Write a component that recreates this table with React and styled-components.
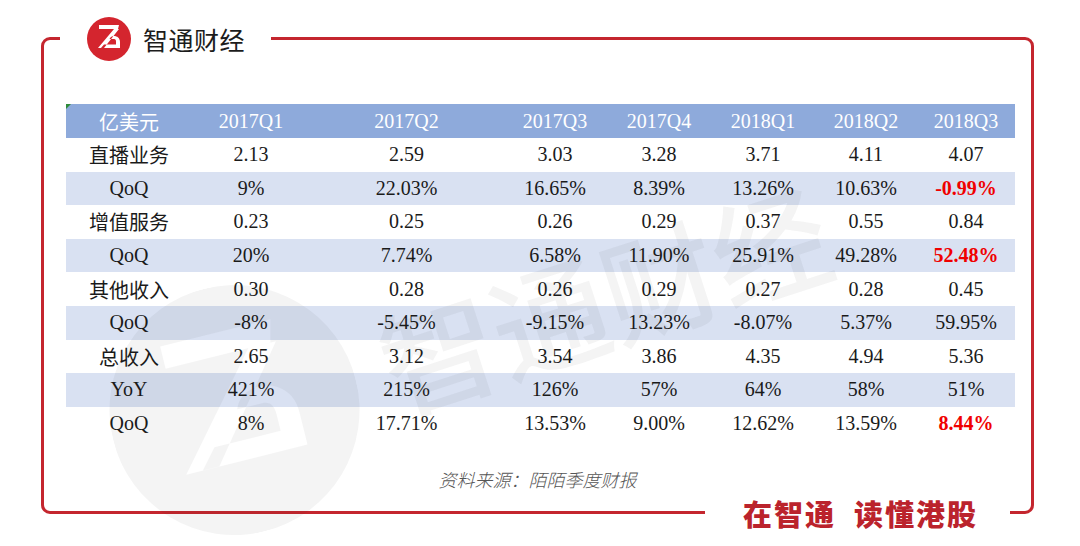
import React from "react";
import styled, { createGlobalStyle } from "styled-components";

const GlobalStyle = createGlobalStyle`
  html, body {
    margin: 0;
    padding: 0;
    background: #ffffff;
  }
`;

const RED = "#c4262e";
const COLS = "126px 118px 193px 104px 104px 104px 102px 98px";

const Page = styled.div`
  position: relative;
  width: 1080px;
  height: 546px;
  padding-top: 37px;
  box-sizing: border-box;
  overflow: hidden;
  background: #fff;
`;

const Frame = styled.section`
  box-sizing: border-box;
  width: 993px;
  height: 477px;
  margin-left: 41px;
  border: 3px solid ${RED};
  border-radius: 9px;
  display: flex;
  flex-direction: column;
`;

const Brand = styled.header`
  align-self: flex-start;
  height: 44px;
  margin: -23.5px 0 0 16px;
  padding: 0 26px 0 27px;
  display: flex;
  align-items: center;
  gap: 12px;
  background: #fff;
`;

const BrandName = styled.span`
  font-family: "Noto Sans CJK SC", sans-serif;
  font-size: 25px;
  font-weight: 400;
  color: #1c1c1c;
  letter-spacing: 0.5px;
`;

const Table = styled.div`
  position: relative;
  width: 949px;
  margin: 43.5px 0 0 22px;
`;

const Row = styled.div`
  position: relative;
  display: grid;
  grid-template-columns: ${COLS};
  height: ${(p) => (p.$tone === "head" ? "34px" : "33.6px")};
  background: ${(p) =>
    p.$tone === "head" ? "#8eaadb" : p.$tone === "band" ? "#d9e1f2" : "#fff"};
  color: ${(p) => (p.$tone === "head" ? "#fff" : "#1a1a1a")};

  ${(p) =>
    p.$tone === "head" &&
    `
    &::before {
      content: "";
      position: absolute;
      top: 0;
      left: 0;
      border-top: 5px solid #2e8b3a;
      border-right: 5px solid transparent;
    }
  `}
`;

const Cell = styled.div`
  display: flex;
  align-items: center;
  justify-content: center;
  font-family: "Liberation Serif", "Noto Sans CJK SC", serif;
  font-size: 20px;
  font-weight: ${(p) => (p.$alert ? 700 : 400)};
  color: ${(p) => (p.$alert ? "#f00000" : "inherit")};
  white-space: nowrap;
`;

const Ticks = styled.div`
  display: grid;
  grid-template-columns: ${COLS};
  width: 949px;
  height: 3px;
  margin: -4px 0 0 22px;
`;

const Tick = styled.span`
  border-left: 1px solid #d2d2d2;
  ${(p) => p.$last && "border-right: 1px solid #d2d2d2;"}
`;

const Source = styled.p`
  margin: 28px 0 0;
  text-align: center;
  font-family: "Noto Sans CJK SC", sans-serif;
  font-size: 18px;
  font-style: italic;
  font-weight: 300;
  line-height: 24px;
  color: #555;
`;

const Slogan = styled.footer`
  margin: auto 21px -21.5px 0;
  align-self: flex-end;
  height: 40px;
  padding: 0 32px 0 38px;
  display: flex;
  align-items: center;
  gap: 18px;
  background: #fff;
  font-family: "Noto Sans CJK SC", sans-serif;
  font-size: 29px;
  font-weight: 900;
  letter-spacing: 2px;
  color: #bb232c;
`;

const Watermark = styled.div`
  position: absolute;
  inset: 0;
  pointer-events: none;
`;

const WatermarkMark = styled.div`
  position: absolute;
  left: 110px;
  top: 285px;
  transform: rotate(-14deg);
`;

const WatermarkText = styled.div`
  position: absolute;
  left: 371px;
  top: 230px;
  font-family: "Noto Sans CJK SC", sans-serif;
  font-size: 116px;
  font-weight: 500;
  line-height: 130px;
  color: rgba(40, 40, 40, 0.05);
  transform: rotate(-18deg);
  white-space: nowrap;
`;

const GLYPH =
  "M12 8 H32 L31 12 H12 Z M27 12 H32 L17 31 H11 Z M14 31 H33 V25 C33 21 30 19 27 19 C24.5 19 23 20.5 22.5 22 H27 C28.5 22 29 23 29 24.5 V27.5 H17 Z";

function LogoMark({ size, fill, id }) {
  return (
    <svg width={size} height={size} viewBox="0 0 44 44">
      <defs>
        <mask id={id}>
          <rect width="44" height="44" fill="#fff" />
          <path d={GLYPH} fill="#000" />
        </mask>
      </defs>
      <circle cx="22" cy="22" r="22" fill={fill} mask={`url(#${id})`} />
    </svg>
  );
}

const header = ["亿美元", "2017Q1", "2017Q2", "2017Q3", "2017Q4", "2018Q1", "2018Q2", "2018Q3"];

const rows = [
  { cells: ["直播业务", "2.13", "2.59", "3.03", "3.28", "3.71", "4.11", "4.07"] },
  { cells: ["QoQ", "9%", "22.03%", "16.65%", "8.39%", "13.26%", "10.63%", "-0.99%"], alert: 7 },
  { cells: ["增值服务", "0.23", "0.25", "0.26", "0.29", "0.37", "0.55", "0.84"] },
  { cells: ["QoQ", "20%", "7.74%", "6.58%", "11.90%", "25.91%", "49.28%", "52.48%"], alert: 7 },
  { cells: ["其他收入", "0.30", "0.28", "0.26", "0.29", "0.27", "0.28", "0.45"] },
  { cells: ["QoQ", "-8%", "-5.45%", "-9.15%", "13.23%", "-8.07%", "5.37%", "59.95%"] },
  { cells: ["总收入", "2.65", "3.12", "3.54", "3.86", "4.35", "4.94", "5.36"] },
  { cells: ["YoY", "421%", "215%", "126%", "57%", "64%", "58%", "51%"] },
  { cells: ["QoQ", "8%", "17.71%", "13.53%", "9.00%", "12.62%", "13.59%", "8.44%"], alert: 7 },
];

export default function App() {
  return (
    <>
      <GlobalStyle />
      <Page>
        <Frame>
          <Brand>
            <LogoMark size={44} fill="#d4252e" id="logo-small" />
            <BrandName>智通财经</BrandName>
          </Brand>

          <Table>
            <Row $tone="head">
              {header.map((h) => (
                <Cell key={h}>{h}</Cell>
              ))}
            </Row>
            {rows.map((r, i) => (
              <Row key={i} $tone={i % 2 === 1 ? "band" : "plain"}>
                {r.cells.map((c, j) => (
                  <Cell key={j} $alert={r.alert === j}>
                    {c}
                  </Cell>
                ))}
              </Row>
            ))}
          </Table>
          <Ticks>
            {header.map((h, i) => (
              <Tick key={h} $last={i === header.length - 1} />
            ))}
          </Ticks>

          <Source>资料来源：陌陌季度财报</Source>

          <Slogan>
            <span>在智通</span>
            <span>读懂港股</span>
          </Slogan>
        </Frame>

        <Watermark>
          <WatermarkMark>
            <LogoMark size={250} fill="rgba(40,40,40,0.05)" id="logo-big" />
          </WatermarkMark>
          <WatermarkText>智通财经</WatermarkText>
        </Watermark>
      </Page>
    </>
  );
}
